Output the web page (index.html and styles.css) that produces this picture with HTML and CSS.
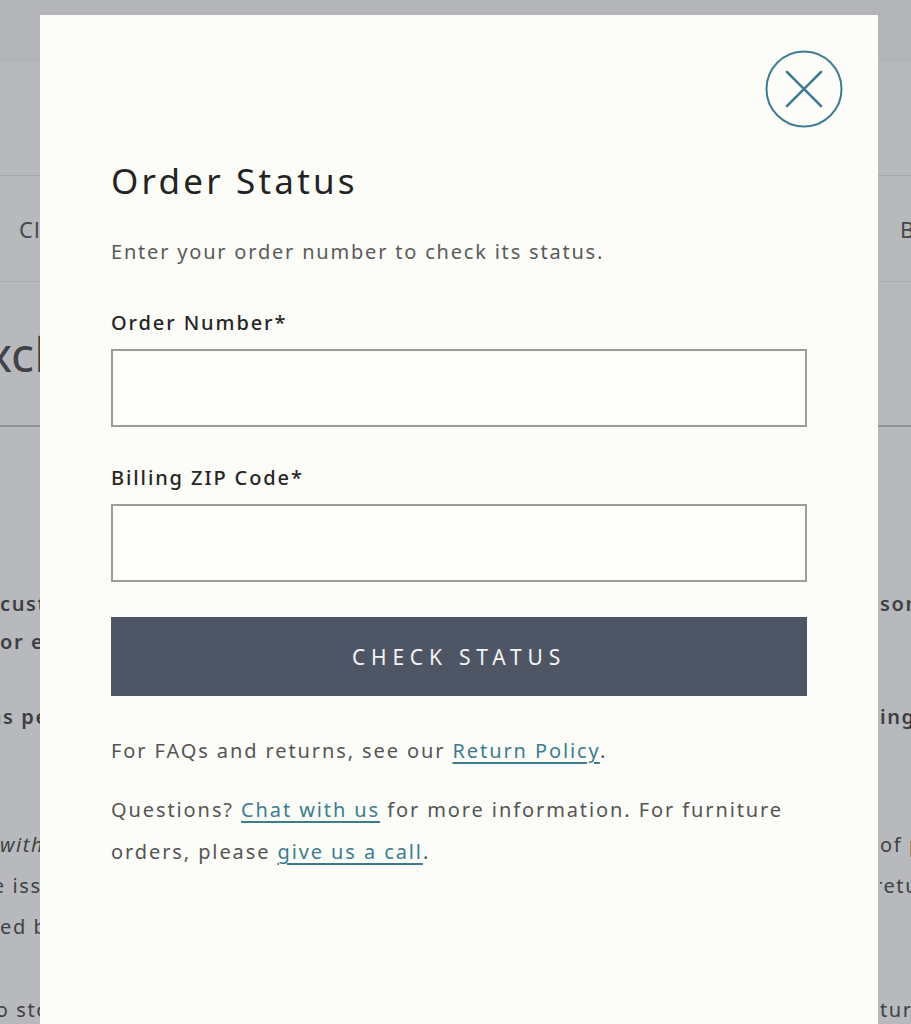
FILE: index.html
```html
<!DOCTYPE html>
<html lang="en">
<head>
<meta charset="utf-8">
<title>Order Status</title>
<link rel="stylesheet" href="styles.css">
</head>
<body>
<div class="page">
  <div class="topbar"></div>
  <div class="band"></div>
  <nav class="nav">
    <span class="nav-left">Clearance</span>
    <span class="nav-right">Bedding</span>
  </nav>
  <div class="hero"><h1 class="hero-title">Exclusions &amp; Exceptions</h1></div>
  <div class="copy">
    <div class="row bold r1"><span class="l">customers who purchase</span><span class="r">sonal</span></div>
    <div class="row bold r2"><span class="l">or exchange</span><span class="r"></span></div>
    <div class="row bold r3"><span class="l cut">items personalized</span><span class="r">ing</span></div>
    <div class="row r4"><span class="l italic">within 30 days</span><span class="r">of purchase</span></div>
    <div class="row r5"><span class="l cut2">the issue</span><span class="r cut3">returns</span></div>
    <div class="row r6"><span class="l">ed by</span><span class="r"></span></div>
    <div class="row r7"><span class="l cut4">to store</span><span class="r">ture</span></div>
  </div>
</div>

<div class="modal" role="dialog" aria-labelledby="os-title">
  <button class="close" aria-label="Close">
    <svg width="78" height="78" viewBox="0 0 78 78" fill="none" stroke="#3f7c91" stroke-width="2">
      <circle cx="39" cy="39" r="37.5"/>
      <path d="M22 22 L56 56 M56 22 L22 56" stroke-width="2.5" stroke-linecap="round"/>
    </svg>
  </button>
  <h2 class="title" id="os-title">Order Status</h2>
  <p class="intro">Enter your order number to check its status.</p>
  <form class="form">
    <label class="label" for="order">Order Number*</label>
    <input class="field" id="order" type="text">
    <label class="label" for="zip">Billing ZIP Code*</label>
    <input class="field" id="zip" type="text">
    <button class="submit" type="button">CHECK STATUS</button>
  </form>
  <p class="note">For FAQs and returns, see our <a href="#">Return Policy</a>.</p>
  <p class="note">Questions? <a href="#">Chat with us</a> for more information. For furniture orders, please <a href="#">give us a call</a>.</p>
</div>
</body>
</html>
```

FILE: styles.css
```css
* { box-sizing: border-box; }
html, body { margin: 0; padding: 0; }
body {
  background: #b7b9bc;
  font-family: "Noto Sans", Lato, sans-serif;
  color: #3f4246;
  overflow: hidden;
  height: 1024px;
}
.page { width: 911px; }
.topbar { height: 62px; background: #b3b4b7; }
.band { height: 113px; background: #b7b9bc; }
.nav {
  height: 107px;
  border-top: 1px solid #a8abae;
  border-bottom: 1px solid #a8abae;
  display: flex;
  justify-content: space-between;
  align-items: center;
  font-size: 22px;
  letter-spacing: 1px;
  color: #45484c;
  overflow: hidden;
  white-space: nowrap;
}
.nav-left { padding-left: 19px; }
.nav-right { width: 11px; overflow: hidden; }
.hero {
  height: 145px;
  border-bottom: 2px solid #909396;
  display: flex;
  align-items: center;
  overflow: hidden;
}
.hero-title {
  margin: 0 0 0 -40px;
  font-weight: 400;
  font-size: 48px;
  color: #3f4246;
  white-space: nowrap;
}
.copy { padding-top: 158px; font-size: 20px; letter-spacing: 1.6px; }
.row {
  display: grid;
  grid-template-columns: 880px 31px;
  white-space: nowrap;
  line-height: 38px;
}
.row .l, .row .r { overflow: hidden; }
.bold { font-weight: 600; color: #3c3f43; }
.r3 { margin-top: 37px; }
.r4 { margin-top: 90px; }
.r5, .r6 { margin-top: 3px; }
.r7 { margin-top: 45px; }
.italic { font-style: italic; }
.cut { text-indent: -48px; }
.cut2 { text-indent: -30px; }
.cut3 { text-indent: -6px; }
.cut4 { text-indent: -13px; }

.modal {
  position: fixed;
  top: 15px;
  left: 40px;
  width: 838px;
  bottom: -40px;
  background: #fcfcf8;
  padding: 0 71px;
  color: #222;
}
.close {
  position: absolute;
  top: 35px;
  right: 35px;
  width: 78px;
  height: 78px;
  padding: 0;
  border: 0;
  background: transparent;
  cursor: pointer;
  display: block;
}
.close svg { display: block; }
.title {
  margin: 144px 0 0;
  font-size: 35px;
  font-weight: 400;
  letter-spacing: 3.2px;
  line-height: 44px;
  color: #232323;
}
.intro {
  margin: 34px 0 0;
  font-size: 20px;
  letter-spacing: 1.8px;
  line-height: 30px;
  color: #5a5a5a;
}
.form { display: flex; flex-direction: column; }
.label {
  margin-top: 41px;
  font-size: 20px;
  font-weight: 500;
  letter-spacing: 1.9px;
  line-height: 30px;
  color: #262626;
}
.field {
  margin-top: 11px;
  height: 78px;
  width: 100%;
  border: 2px solid #9c9c9a;
  background: #fdfdf9;
  font: inherit;
  border-radius: 0;
}
.field + .label { margin-top: 36px; }
.submit {
  margin-top: 35px;
  height: 79px;
  width: 100%;
  border: 0;
  background: #4e5665;
  color: #f4f4f4;
  font-family: inherit;
  font-size: 21px;
  letter-spacing: 5.8px;
  padding: 0;
  cursor: pointer;
}
.note {
  margin: 34px 0 0;
  font-size: 20px;
  letter-spacing: 1.9px;
  line-height: 42px;
  color: #555;
}
.note + .note { margin-top: 17px; }
.note a { color: #3d7c90; text-decoration: underline; text-underline-offset: 4px; }
```
